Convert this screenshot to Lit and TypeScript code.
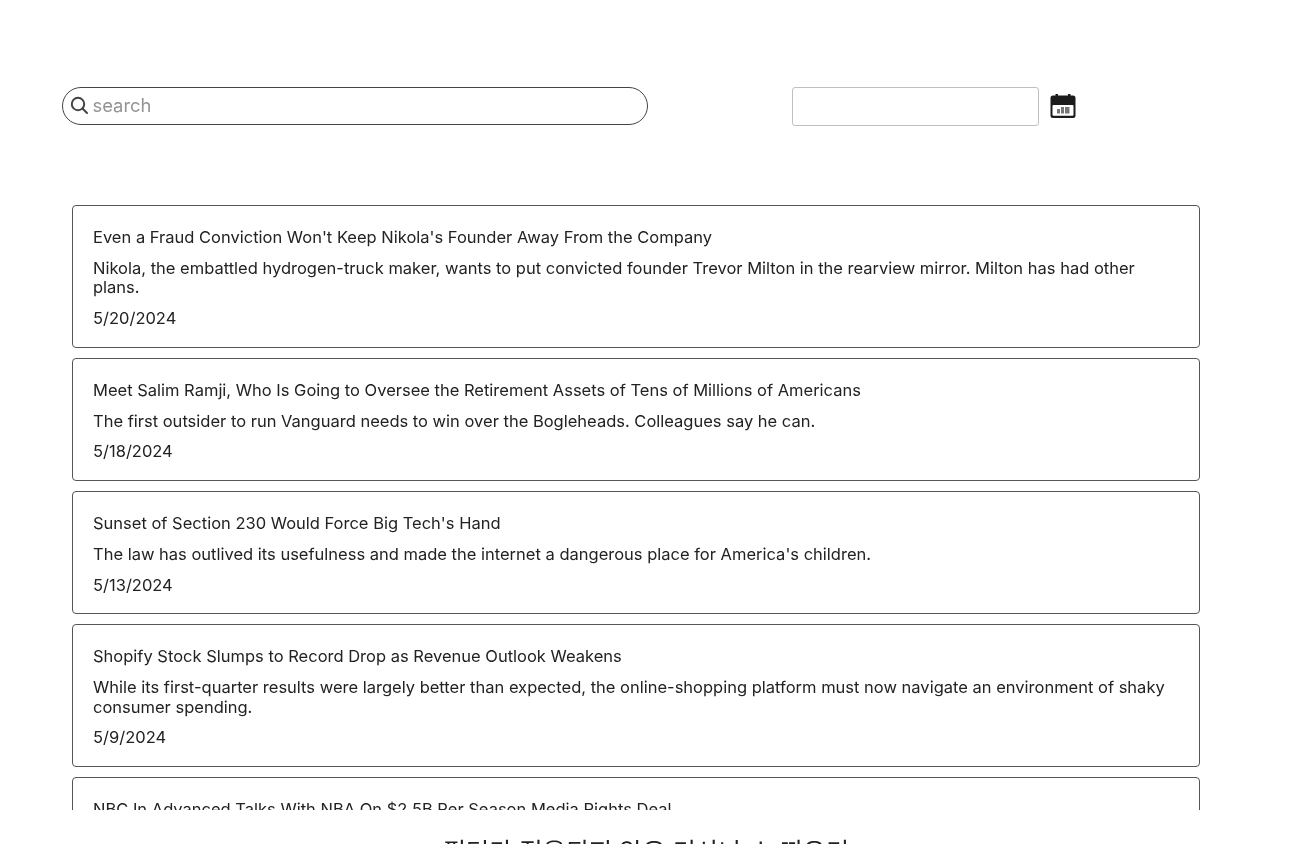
import { LitElement, html, css } from "lit";
import { customElement } from "lit/decorators.js";

const items = [
  ["Even a Fraud Conviction Won't Keep Nikola's Founder Away From the Company", "Nikola, the embattled hydrogen-truck maker, wants to put convicted founder Trevor Milton in the rearview mirror. Milton has had other plans.", "5/20/2024"],
  ["Meet Salim Ramji, Who Is Going to Oversee the Retirement Assets of Tens of Millions of Americans", "The first outsider to run Vanguard needs to win over the Bogleheads. Colleagues say he can.", "5/18/2024"],
  ["Sunset of Section 230 Would Force Big Tech's Hand", "The law has outlived its usefulness and made the internet a dangerous place for America's children.", "5/13/2024"],
  ["Shopify Stock Slumps to Record Drop as Revenue Outlook Weakens", "While its first-quarter results were largely better than expected, the online-shopping platform must now navigate an environment of shaky consumer spending.", "5/9/2024"],
  ["NBC In Advanced Talks With NBA On $2.5B Per Season Media Rights Deal", "", ""],
];

@customElement("app-root")
export class AppRoot extends LitElement {
  static styles = css`
    :host { display: block; height: 844px; overflow: hidden; background: #fff; font-family: Inter, "Noto Sans CJK KR", sans-serif; color: #222; filter: blur(0.45px); }
    .top { display: flex; align-items: center; padding: 86px 0 0 62px; height: 40px; }
    .search { display: flex; align-items: center; gap: 2.5px; box-sizing: border-box; width: 586px; height: 38px; border: 1.5px solid #444; border-radius: 19px; padding: 0 0 2px 7px; color: #949494; font-size: 18.4px; }
    .search svg { display: block; }
    .date { box-sizing: border-box; width: 247px; height: 39px; margin-left: 144px; border: 1.5px solid #c0c0c0; border-radius: 3px; }
    .cal { display: block; margin-left: 10.5px; }
    .list { box-sizing: border-box; height: 605px; overflow: hidden; margin: 79px 0 0 72px; width: 1128px; display: flex; flex-direction: column; gap: 10px; }
    .card { box-sizing: border-box; flex: none; border: 1.5px solid #555; border-radius: 4px; padding: 22px 20px 18.25px; font-size: 16.5px; line-height: 19.5px; }
    .card p { margin: 0 0 11.25px; }
    .card p:last-child { margin-bottom: 0; }
    .foot { margin-top: 26px; text-align: center; font-size: 25.2px; line-height: 32px; width: 1292px; }
  `;

  render() {
    return html`
      <div class="top">
        <div class="search">
          <svg width="20" height="20" viewBox="0 0 20 20" fill="none" stroke="#444" stroke-width="2"><circle cx="8" cy="9" r="6.2"/><path d="M12.500 13.500 17 18" stroke-linecap="round"/></svg>
          <span>search</span>
        </div>
        <div class="date"></div>
        <svg class="cal" width="26" height="26" viewBox="0 0 26 26">
          <path d="M.5 5a2.500 2.500 0 0 1 2.500-2.500h2.500V1h2.500v1.500h10V1h2.500v1.500H23A2.500 2.500 0 0 1 25.500 5v17.500A2.500 2.500 0 0 1 23 25H3a2.500 2.500 0 0 1-2.500-2.500z" fill="#1b1b1b"/>
          <rect x="2.500" y="12" width="21" height="10.700" rx="1" fill="#fff"/>
          <rect x="7" y="16" width="3" height="4.500" fill="#777"/><rect x="11" y="14" width="3" height="6.500" fill="#777"/><rect x="15" y="14" width="4.500" height="6.500" fill="#777"/>
        </svg>
      </div>
      <div class="list">
        ${items.map(([t, d, dt]) => html`<div class="card"><p>${t}</p>${d ? html`<p>${d}</p><p>${dt}</p>` : html`<p>&nbsp;</p><p>&nbsp;</p>`}</div>`)}
      </div>
      <div class="foot">필터가 적용되지 않은 기사나 스 띄우기</div>
    `;
  }
}
